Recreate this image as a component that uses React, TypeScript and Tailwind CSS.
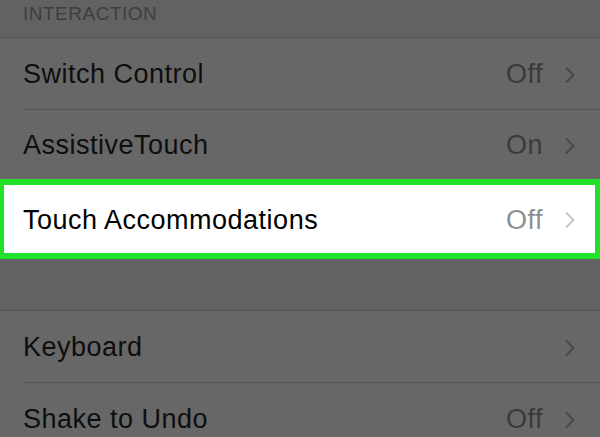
import React from 'react';

type Row = {
  label: string;
  value?: string;
};

const Chevron: React.FC<{ className?: string }> = ({ className }) => (
  <svg width="12" height="18" viewBox="0 0 12 18" fill="none" className={className}>
    <path d="M2.5 2L9.5 9L2.5 16" stroke="currentColor" strokeWidth="1.8" strokeLinecap="round" strokeLinejoin="round" />
  </svg>
);

const DimRow: React.FC<{ row: Row; height: string; divider?: boolean }> = ({ row, height, divider }) => (
  <div className={`flex items-center bg-[#676767] pl-[23px] ${height}`}>
    <div className={`flex h-full flex-1 items-center pr-[24px] pt-[2px] ${divider ? 'border-b border-[#555555]' : ''}`}>
      <span className="flex-1 text-[27px] tracking-[0.5px] text-[#0e0e0e]">{row.label}</span>
      {row.value && <span className="mr-[21px] text-[27px] tracking-[0.5px] text-[#3a3a3a]">{row.value}</span>}
      <Chevron className="text-[#474747]" />
    </div>
  </div>
);

export default function App() {
  return (
    <div className="h-[437px] w-[600px] overflow-hidden bg-[#626262]" style={{ fontFamily: '"Liberation Sans", Arial, sans-serif' }}>
      {/* section header */}
      <div className="flex h-[38px] items-start border-b border-[#555555] pl-[23px]">
        <span className="text-[19px] uppercase leading-[28px] tracking-[0.5px] text-[#3e3e3e]">Interaction</span>
      </div>

      <DimRow row={{ label: 'Switch Control', value: 'Off' }} height="h-[72px]" divider />
      <DimRow row={{ label: 'AssistiveTouch', value: 'On' }} height="h-[69px]" />

      {/* highlighted row */}
      <div className="flex h-[80px] items-center border-y-[6px] border-l-4 border-r-[5px] border-[#22e12a] bg-white pl-[19px] pr-[19px] pt-[2px]">
        <span className="flex-1 text-[27px] tracking-[0.5px] text-black">Touch Accommodations</span>
        <span className="mr-[21px] text-[27px] tracking-[0.5px] text-[#8e8e93]">Off</span>
        <Chevron className="text-[#c4c4c8]" />
      </div>

      <div className="h-[52px] border-b border-[#555555]" />

      <DimRow row={{ label: 'Keyboard' }} height="h-[72px]" divider />
      <DimRow row={{ label: 'Shake to Undo', value: 'Off' }} height="h-[71px]" />
    </div>
  );
}
